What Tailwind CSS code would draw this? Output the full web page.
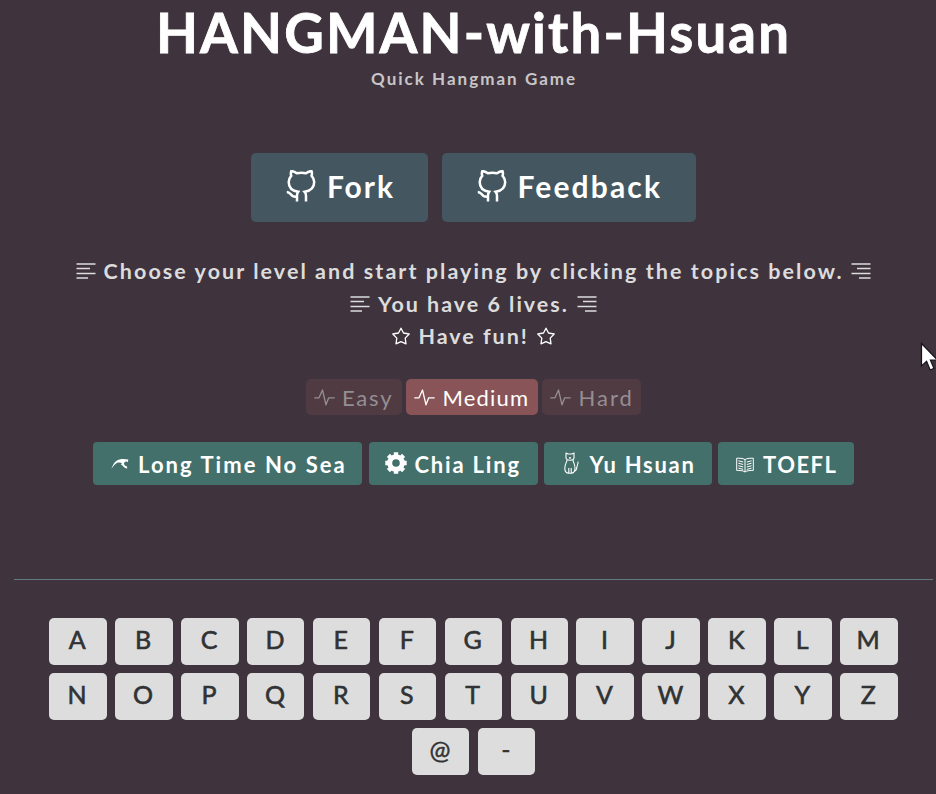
<!DOCTYPE html>
<html lang="en">
<head>
<meta charset="utf-8">
<title>HANGMAN-with-Hsuan</title>
<script src="https://cdn.jsdelivr.net/npm/@tailwindcss/browser@4"></script>
</head>
<body class="h-[794px] overflow-hidden bg-[#3f343d] font-['Lato','Noto_Sans',sans-serif] text-white">
<svg class="hidden">
  <symbol id="github" viewBox="0 0 30 32"><path d="M11 31.5V25.5C11 24 11.5 22.8 12.2 21.8C6.5 21 2.7 18 2.7 12C2.7 9.4 3.7 7.4 5.2 5.8C4.7 4.5 4.7 3 5.3 1.2C7.2 1 9 1.9 10.8 3.2C13.4 2.6 17.4 2.6 20 3.2C21.8 1.9 23.6 1 25.5 1.2C26.1 3 26.1 4.5 25.6 5.8C27.1 7.4 28.2 9.4 28.2 12C28.2 18 24 21 18.6 21.8C19.5 22.8 20 24 20 25.5V31.5M11 26.7C7.5 27.4 5.7 25.8 4.3 23.8C3.5 22.8 2.2 22 .8 21.9" fill="none" stroke="currentColor" stroke-width="2.5"/></symbol>
  <symbol id="lines" viewBox="0 0 20 16"><path d="M.5 1H19.5M.5 5.5H14M.5 10.5H19.5M.5 15H12" fill="none" stroke="currentColor" stroke-width="1.4"/></symbol>
  <symbol id="lines-right" viewBox="0 0 20 16"><path d="M.5 1H19.5M6 5.5H19.5M.5 10.5H19.5M8 15H19.5" fill="none" stroke="currentColor" stroke-width="1.4"/></symbol>
  <symbol id="star" viewBox="0 0 18 18"><path d="M9 1.2L11.5 6L17.2 7L13.2 11.1L14 16.8L9 14.6L4 16.8L4.8 11.1L.8 7L6.5 6Z" fill="none" stroke="currentColor" stroke-width="1.3" stroke-linejoin="round"/></symbol>
  <symbol id="pulse" viewBox="0 0 21 18"><path d="M.3 9.8H5L8.5 2L12 16.8L14.7 9.8H20.7" fill="none" stroke="currentColor" stroke-width="1.3" stroke-linejoin="round"/></symbol>
</svg>
<main class="ml-[14px] w-[919px]">
  <h1 class="flex h-[66px] justify-center whitespace-nowrap text-[54.5px] leading-[65.4px] font-bold tracking-[2.15px] [-webkit-text-stroke:0.8px_white]">HANGMAN-with-Hsuan</h1>
  <p class="pl-[357px] text-[17px] leading-[26px] font-bold tracking-[2.02px] text-[#c8c6c8]">Quick Hangman Game</p>

  <div class="mt-[61px] flex gap-[14px] pl-[237px]">
    <a class="flex h-[69px] w-[177px] items-center rounded-[5px] bg-[#445760] pb-[2px] pl-[35px] text-[30px] font-bold tracking-[1.95px]"><svg class="mr-[11px] -mt-px h-[32px] w-[30px]"><use href="#github"/></svg>Fork</a>
    <a class="flex h-[69px] w-[254px] items-center rounded-[5px] bg-[#445760] pb-[2px] pl-[35px] text-[30px] font-bold tracking-[2.15px]"><svg class="mr-[10.5px] -mt-px h-[32px] w-[30px]"><use href="#github"/></svg>Feedback</a>
  </div>

  <div class="mt-[33px] text-[21.5px] leading-[32.5px] font-bold whitespace-nowrap text-[#dddcdd]">
    <p class="flex items-center pl-[61.5px]"><svg class="mr-[8px] h-[16px] w-[20px]"><use href="#lines"/></svg><span class="w-[747.5px] tracking-[2.06px]">Choose your level and start playing by clicking the topics below.</span><svg class="h-[16px] w-[20px]"><use href="#lines-right"/></svg></p>
    <p class="flex items-center pl-[336px]"><svg class="mr-[8px] h-[16px] w-[20px]"><use href="#lines"/></svg><span class="w-[199px] tracking-[1.97px]">You have 6 lives.</span><svg class="h-[16px] w-[20px]"><use href="#lines-right"/></svg></p>
    <p class="flex items-center pl-[378px]"><svg class="mr-[8.5px] h-[18px] w-[18px] text-white"><use href="#star"/></svg><span class="w-[118.5px] tracking-[1.95px]">Have fun!</span><svg class="h-[18px] w-[18px] text-white"><use href="#star"/></svg></p>
  </div>

  <div class="mt-[26.5px] flex gap-[4px] pl-[292px] text-[22px]">
    <button class="flex h-[36px] w-[96px] items-center rounded-[5px] bg-[#503b43] pl-[8px] tracking-[1.8px] text-[#958e92]"><svg class="mr-[7px] h-[18px] w-[21px]"><use href="#pulse"/></svg>Easy</button>
    <button class="flex h-[36px] w-[132px] items-center rounded-[5px] bg-[#885457] pl-[8px] tracking-[1.2px]"><svg class="mr-[7.5px] h-[18px] w-[21px]"><use href="#pulse"/></svg>Medium</button>
    <button class="flex h-[36px] w-[99px] items-center rounded-[5px] bg-[#503b43] pl-[8px] tracking-[2px] text-[#958e92]"><svg class="mr-[7.5px] h-[18px] w-[21px]"><use href="#pulse"/></svg>Hard</button>
  </div>

  <div class="mt-[27px] flex pl-[79px] text-[22px] font-bold whitespace-nowrap [&>button]:h-[43px] [&>button]:rounded-[4px] [&>button]:bg-[#44706c] [&>button]:flex [&>button]:items-center [&>button]:pt-[2px]">
    <button class="mr-[7px] w-[269px] pl-[18px] tracking-[2.05px]"><svg class="mr-[9px] -mt-[2px] h-[12px] w-[18px]" viewBox="0 0 18 12"><path d="M.3 10.8C1.8 7.2 3.3 4.4 5.3 3C8.4 .5 13.5.6 17.3 1.6L16.8 4.2L15 3.2L13.8 4.2C12.6 4.5 12.8 7 14.4 7.8L16 8.6L16.2 10.4C14.6 10.5 12.5 9.2 11.7 7.8L9.8 6.2L11 5.2C9 4.2 6.5 4.4 4.5 6C2.9 7.2 1.7 9 .3 10.8Z" fill="currentColor"/></svg>Long Time No Sea</button>
    <button class="mr-[6px] w-[169px] pl-[16px] tracking-[1.8px]"><svg class="mr-[7.5px] -mt-[3px] h-[22px] w-[22px]" viewBox="0 0 22 22"><circle cx="11" cy="11" r="6.3" fill="none" stroke="currentColor" stroke-width="5"/><path d="M11 .3V4M11 18V21.7M.3 11H4M18 11H21.7M3.4 3.4L6 6M16 16L18.6 18.6M18.6 3.4L16 6M6 16L3.4 18.6" stroke="currentColor" stroke-width="4.4"/></svg>Chia Ling</button>
    <button class="mr-[6px] w-[168px] pl-[20px] tracking-[1.7px]"><svg class="mr-[10.5px] -mt-[3px] h-[22px] w-[15px]" viewBox="0 0 15 22"><g fill="none" stroke="currentColor" stroke-width="1.1" stroke-linejoin="round"><path d="M2 5.8V1L4 2H8L10 1V5.8C10 7.3 8.3 8.2 6 8.2S2 7.3 2 5.8ZM3 8C3 10 .8 12 .8 16C.8 19.3 2.5 21.2 4.8 21.2H7.2C9.5 21.2 11 19.3 11 16C11 12 9 10 9 8M4.8 21V16M7.2 21V16M11 19C13.4 17.8 12.4 15.3 13.3 13.4C14 11.8 14.3 11 14 9.6"/><path d="M5 5.5L6 6.3L7 5.5"/></g></svg>Yu Hsuan</button>
    <button class="w-[136px] pl-[18px] tracking-[1.5px]"><svg class="mr-[9px] h-[16px] w-[18px]" viewBox="0 0 18 16"><path d="M9 2.5V15M.7 1.2C3.5 1.3 6.8 1 9 2.6C11.2 1 14.5 1.3 17.3 1.2V13.4C14.5 13.5 11.2 13.3 9 15C6.8 13.3 3.5 13.5 .7 13.4ZM2.4 3.8L7.2 5M2.4 6.2L7.2 7.5M2.4 8.7L7.2 10M2.4 11.1L7.2 12.4M15.6 3.8L10.8 5M15.6 6.2L10.8 7.5M15.6 8.7L10.8 10M15.6 11.1L10.8 12.4" fill="none" stroke="currentColor"/></svg>TOEFL</button>
  </div>

  <hr class="mt-[94px] border-t border-[#627982]">

  <div class="mt-[38px] grid grid-cols-[repeat(13,57.6px)] gap-x-[8.34px] gap-y-[8px] pl-[35.1px] text-[25px] text-[#303234] [&>button]:h-[47px] [&>button]:rounded-[5px] [&>button]:bg-[#ddd] [&>button]:pb-[3px] [&>button]:pr-[1.5px] [&>button]:[-webkit-text-stroke:0.6px_#303234]">
    <button>A</button><button>B</button><button>C</button><button>D</button><button>E</button><button>F</button><button>G</button><button>H</button><button>I</button><button>J</button><button>K</button><button>L</button><button>M</button>
    <button>N</button><button>O</button><button>P</button><button>Q</button><button>R</button><button>S</button><button>T</button><button>U</button><button>V</button><button>W</button><button>X</button><button>Y</button><button>Z</button>
  </div>
  <div class="mt-[8px] flex justify-center gap-[8.4px] text-[25px] text-[#303234] [&>button]:h-[47px] [&>button]:w-[57.6px] [&>button]:rounded-[5px] [&>button]:bg-[#ddd] [&>button]:pb-[3px] [&>button]:pr-[1px] [&>button]:[-webkit-text-stroke:0.4px_#303234]">
    <button>@</button><button>-</button>
  </div>
</main>
<svg class="absolute top-[342px] left-[920px] h-[30px] w-[20px]" viewBox="0 0 20 30"><path d="M1.5 1.5V24L6.6 19.3L10.2 28L14 26.4L10.4 18H17.5Z" fill="#fff" stroke="#15131a" stroke-width="1.2"/></svg>
</body>
</html>
